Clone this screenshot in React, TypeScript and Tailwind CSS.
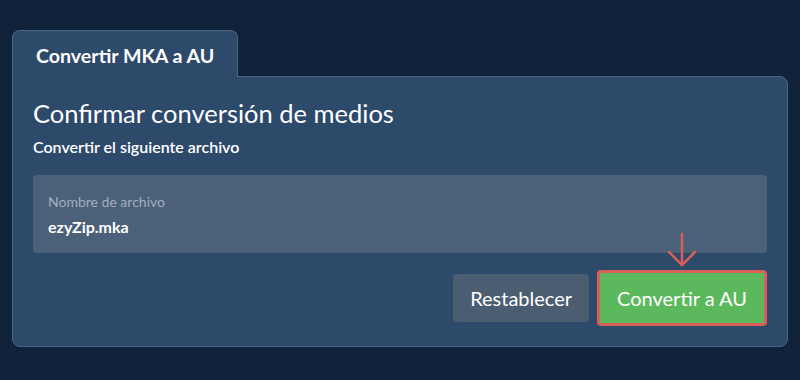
export default function App() {
  return (
    <div className="min-h-[380px] w-[800px] bg-[#11233a] px-3 pt-[30px] font-['Lato',sans-serif] text-white">
      <div className="relative z-10 -mb-px flex h-[47px] w-[226px] items-center rounded-t-lg border border-b-0 border-[#4b6585] bg-[#2d4a6b] pl-[23px] pt-1">
        <span className="text-[19.6px] font-bold">Convertir MKA a AU</span>
      </div>
      <div className="w-[776px] rounded-tr-lg rounded-b-lg border border-[#4b6585] bg-[#2d4a6b] px-5 pb-5 pt-[19px]">
        <h1 className="text-[25.5px] leading-[34px]">Confirmar conversión de medios</h1>
        <p className="mt-[7px] text-[16px] font-semibold leading-5">Convertir el siguiente archivo</p>
        <div className="mt-[18px] flex h-[78px] flex-col justify-center rounded bg-[#4b6079] px-[15px]">
          <span className="text-[14px] leading-5 text-[#a3afbd]">Nombre de archivo</span>
          <span className="mt-[5px] text-[16px] font-bold leading-5">ezyZip.mka</span>
        </div>
        <div className="mt-[17px] flex items-center justify-end gap-2">
          <button className="h-12 rounded bg-[#4b5d71] px-[17px] text-[20px]">Restablecer</button>
          <div className="relative">
            <svg className="absolute -top-[38px] left-1/2 -translate-x-1/2" width="30" height="36" viewBox="0 0 30 36" fill="none" stroke="#d9605a" strokeWidth="2.5" strokeLinecap="round" strokeLinejoin="round">
              <path d="M15 2 V33" />
              <path d="M2 20 L15 33 L28 20" />
            </svg>
            <button className="h-[56px] rounded border-[3px] border-[#d9605a] bg-[#5cb85c] px-[17px] text-[20px]">
              Convertir a AU
            </button>
          </div>
        </div>
      </div>
    </div>
  );
}
